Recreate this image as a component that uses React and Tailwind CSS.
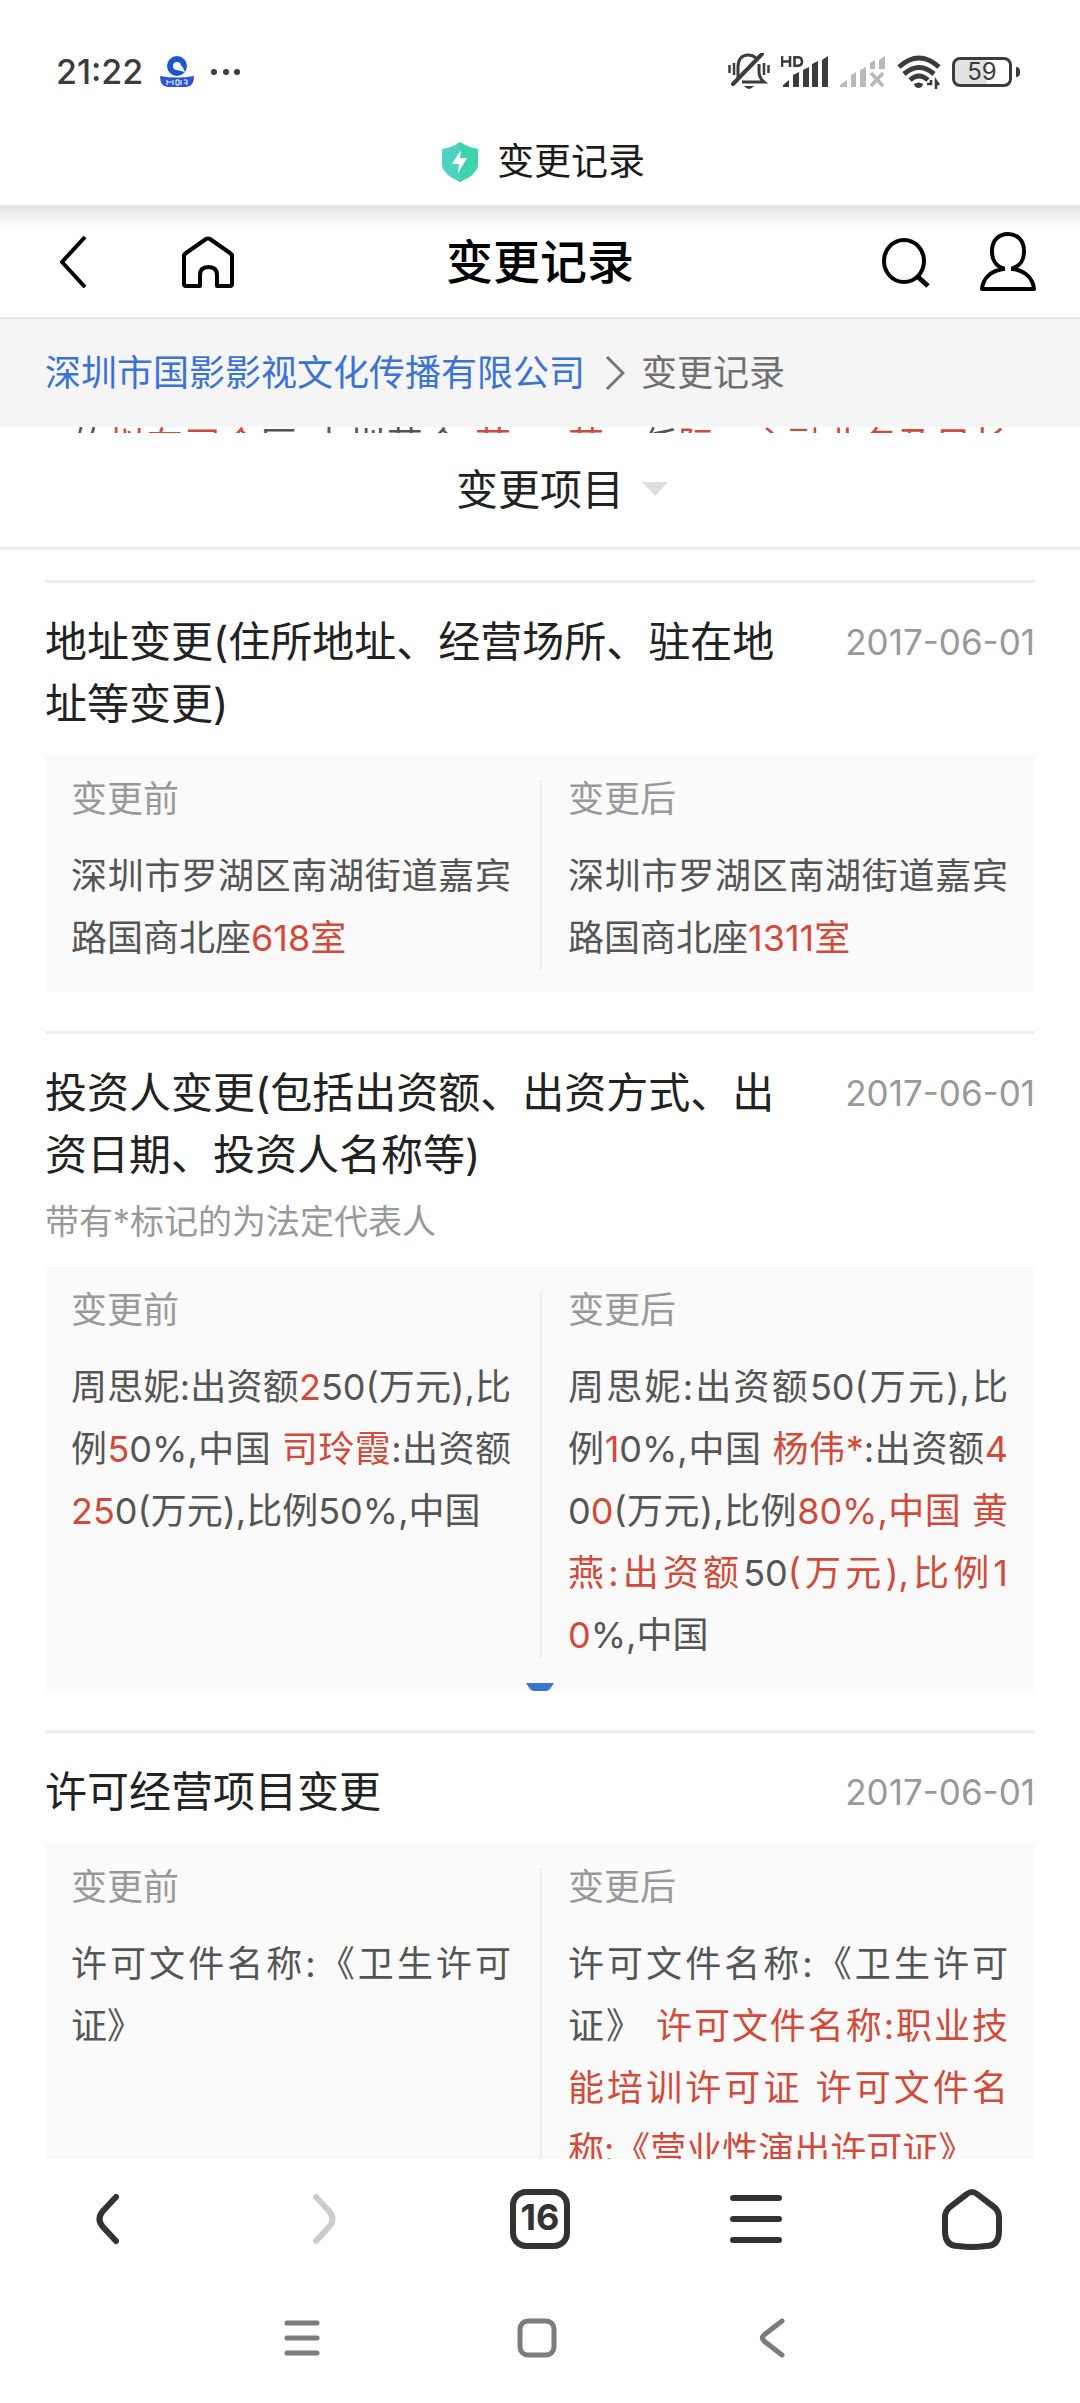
import React from 'react';

const records = [
  {
    title: '地址变更(住所地址、经营场所、驻在地址等变更)',
    date: '2017-06-01',
    before: [['深圳市罗湖区南湖街道嘉宾路国商北座'], ['618室', true]],
    after: [['深圳市罗湖区南湖街道嘉宾路国商北座'], ['1311室', true]]
  },
  {
    title: '投资人变更(包括出资额、出资方式、出资日期、投资人名称等)',
    date: '2017-06-01',
    note: '带有*标记的为法定代表人',
    collapsed: true,
    before: [
      ['周思妮:出资额'], ['2', true], ['50(万元),比例'], ['5', true], ['0%,中国 '],
      ['司玲霞', true], [':出资额'], ['25', true], ['0(万元),比例50%,中国']
    ],
    after: [
      ['周思妮:出资额50(万元),比例'], ['1', true], ['0%,中国 '], ['杨伟*', true], [':出资额'],
      ['4', true], ['0'], ['0', true], ['(万元),比例'], ['80%,中国 黄燕:出资额', true], ['50'],
      ['(万元),比例10', true], ['%,中国']
    ]
  },
  {
    title: '许可经营项目变更',
    date: '2017-06-01',
    before: [['许可文件名称:《卫生许可证》']],
    after: [
      ['许可文件名称:《卫生许可证》 '],
      ['许可文件名称:职业技能培训许可证 许可文件名称:《营业性演出许可证》', true]
    ]
  }
];

const DiffText = ({ parts }) => (
  <>
    {parts.map(([text, changed], index) => (
      <span key={index} className={changed ? 'text-[#d24a3a]' : undefined}>{text}</span>
    ))}
  </>
);

const StatusBar = () => (
  <div className="flex h-[130px] shrink-0 items-center justify-between pt-[14px] pr-[60px] pl-14 text-[#3c3c3c]">
    <div className="flex items-center gap-4">
      <span className="text-[34px] leading-none font-medium">21:22</span>
      <svg width="36" height="34" viewBox="0 0 36 34">
        <circle cx="18" cy="11" r="7" fill="none" stroke="#1b55cf" strokeWidth="6" />
        <path d="M18 11h5l3 6-8-2z" fill="#fff" />
        <path d="M1 21q17 3 34 0q0 11-8 11H9q-8 0-8-11z" fill="#2f55d4" />
        <path d="M8 25v5M8 27h5M14 25v5M17 25h3v5h-3zM22 25v5M25 25h3M25 28h3M28 25v5" stroke="#fff" strokeWidth="1" fill="none" />
      </svg>
      <svg width="30" height="8" viewBox="0 0 30 8" fill="#3c3c3c">
        <circle cx="3" cy="4" r="3" />
        <circle cx="15" cy="4" r="3" />
        <circle cx="26" cy="4" r="3" />
      </svg>
    </div>

    <div className="flex items-center gap-[11px]">
      {/* Silent mode */}
      <svg width="42" height="38" viewBox="0 0 42 38" fill="none" stroke="#3c3c3c" strokeWidth="3">
        <path d="M10 27V14C10 6 14 2 20 2q5 0 8 3" />
        <path d="M31 11v7q0 7 5 11H14" />
        <path d="M34 1L5 31" strokeWidth="4" strokeLinecap="round" />
        <path d="M1.500 12v8M6 10v12M36 10v12M40.500 12v8" strokeWidth="2.500" />
        <path d="M16 33h10q-5 6-10 0z" fill="#3c3c3c" stroke="none" />
      </svg>
      {/* Signal, first card */}
      <svg width="48" height="34" viewBox="0 0 48 34" fill="#3c3c3c">
        <path d="M1 1v11M9 1v11M1 6.500h8M13.500 2.300v8.500h3q4.500 0 4.500-4.300t-4.500-4.200z" fill="none" stroke="#3c3c3c" strokeWidth="2.600" />
        <path d="M2 32v-2l6-5v7zM12 32V20l6-3v15zM22 32V15l6-3v20zM31 32V9l6-3v26zM41 32V5l6-4v31z" />
      </svg>
      {/* Signal, second card */}
      <svg width="46" height="34" viewBox="0 0 46 34" fill="#b9b9b9">
        <path d="M0 32v-2l7-5v7zM11 32V20l5-3v15zM20 32V15l6-3v20zM30 14V8l5-3v9zM39 14V5l6-4v13z" />
        <path d="M31 18l12 13M43 18L31 31" stroke="#b9b9b9" strokeWidth="3.600" />
      </svg>
      {/* Wifi */}
      <svg width="44" height="36" viewBox="0 0 44 36" fill="none" stroke="#3c3c3c" strokeWidth="5">
        <path d="M2 13q20-18 40 0" />
        <path d="M7 20q15-13 30 0" />
        <path d="M13 26q9-8 18 0" />
        <path d="M17 30q5-3 9 0q-1 4-4.500 4t-4.500-4z" fill="#3c3c3c" stroke="none" />
        <path d="M30 30h4V26M39 35v-8l3 4" strokeWidth="2.600" />
      </svg>
      {/* Battery */}
      <div className="flex items-center gap-1">
        <div className="flex h-[30px] w-[60px] items-center justify-center rounded-lg border-[3px] border-[#3c3c3c] bg-linear-to-r from-[#e2e2e2] from-60% to-white to-60% text-2xl leading-none">
          59
        </div>
        <div className="h-[10px] w-[4px] rounded-r-sm bg-[#3c3c3c]" />
      </div>
    </div>
  </div>
);

const TitleBar = () => (
  <div className="flex h-[75px] shrink-0 items-center justify-center gap-[18px] pb-[12px] pl-[6px] text-[#1b1b1b]">
    <svg width="38" height="42" viewBox="0 0 38 42">
      <path d="M19 1q9 6 18 7v17q-2 9-18 16Q3 34 1 25V8q9-1 18-7z" fill="#4fd3c0" />
      <path d="M19 1q9 6 18 7v17q-2 9-18 16z" fill="#3fd3ad" />
      <path d="M20 9l-9 14h7l-1 9 9-15h-7z" fill="#fff" />
    </svg>
    <span className="text-[37px] leading-none">变更记录</span>
  </div>
);

const Header = () => (
  <header className="flex h-[114px] shrink-0 items-center border-b-2 border-[#e8e8e8] bg-linear-to-b from-[#e2e2e2] to-white to-20% px-11">
    <div className="flex flex-1 items-center gap-[94px]">
      <button aria-label="返回" className="pl-3">
        <svg width="32" height="54" viewBox="0 0 32 54" fill="none" stroke="#000" strokeWidth="4" strokeLinejoin="round">
          <path d="M29 3L6 28l23 25" />
        </svg>
      </button>
      <a href="#home" aria-label="首页">
        <svg width="52" height="54" viewBox="0 0 52 54" fill="none" stroke="#000" strokeWidth="4" strokeLinejoin="round">
          <path d="M18 52H4q-2 0-2-2V21l2-2L24 5q2-1 4 0l20 14 2 2v29q0 2-2 2H35V41q0-8-8.500-8T18 41z" />
          <path d="M20 52h13" stroke="#fff" strokeWidth="5" />
        </svg>
      </a>
    </div>
    <h1 className="text-[47px] leading-none font-medium text-black">变更记录</h1>
    <div className="flex flex-1 items-center justify-end gap-[50px]">
      <button aria-label="搜索">
        <svg width="50" height="54" viewBox="0 0 50 54" fill="none" stroke="#000" strokeWidth="4">
          <ellipse cx="24" cy="27" rx="20" ry="21" />
          <path d="M37 42l11 10" strokeWidth="5" />
        </svg>
      </button>
      <button aria-label="我的">
        <svg width="56" height="60" viewBox="0 0 56 60" fill="none" stroke="#000" strokeWidth="4" strokeLinejoin="round">
          <path d="M25 38C15 35 12 29 12 20c0-11 7-17 16-17s16 6 16 17c0 9-3 15-13 18h2c12 2 20 9 21 20H2c1-11 9-18 21-20z" />
          <path d="M25 38h6" stroke="#fff" strokeWidth="6" />
        </svg>
      </button>
    </div>
  </header>
);

const Breadcrumb = () => (
  <nav className="flex h-[108px] shrink-0 items-center gap-4 bg-[#f5f5f5] px-[45px] text-[36px] leading-none">
    <a href="#company" className="pr-1 text-[#3a73d1]">深圳市国影影视文化传播有限公司</a>
    <svg width="20" height="34" viewBox="0 0 20 34" fill="none" stroke="#777" strokeWidth="3">
      <path d="M2 1l16 16L2 33" />
    </svg>
    <span className="text-[#707070]">变更记录</span>
  </nav>
);

const Column = ({ label, parts, collapsed, className }) => (
  <div className={collapsed ? `${className} max-h-[366px] overflow-hidden` : className}>
    <div className="text-[36px] leading-[38px] text-[#999]">{label}</div>
    <p className="mt-[27px] text-justify text-[36px] leading-[62px] break-all text-[#555]">
      <DiffText parts={parts} />
    </p>
  </div>
);

const RecordItem = ({ record }) => (
  <article className="mb-[39px] border-t-[3px] border-[#eee] pt-7">
    <div className="flex items-start justify-between">
      <h2 className="w-[730px] text-[42px] leading-[62px] text-[#222]">{record.title}</h2>
      <time className="text-[35px] leading-[62px] text-[#999]">{record.date}</time>
    </div>
    {record.note && <p className="mt-3 text-[34px] leading-[48px] text-[#999]">{record.note}</p>}
    <div className={record.collapsed ? 'mt-[21px] bg-[#fafafa] pt-6' : 'mt-[21px] bg-[#fafafa] pt-6 pb-[23px]'}>
      <div className="grid grid-cols-2">
        <Column label="变更前" parts={record.before} collapsed={record.collapsed} className="pr-[29px] pl-[26px]" />
        <Column label="变更后" parts={record.after} collapsed={record.collapsed} className="border-l-2 border-[#eee] pr-[27px] pl-[26px]" />
      </div>
      {record.collapsed && (
        <button aria-label="展开" className="flex h-[34px] w-full items-end justify-center">
          <svg width="28" height="8" viewBox="0 0 28 8">
            <path d="M0 0h28l-4 6q-2 2-4 2H8q-2 0-4-2z" fill="#3a73d1" />
          </svg>
        </button>
      )}
    </div>
  </article>
);

const BrowserNav = () => (
  <nav className="grid h-[120px] shrink-0 grid-cols-5 place-items-center bg-white text-[#333]">
    <button aria-label="后退">
      <svg width="24" height="52" viewBox="0 0 24 52" fill="none" stroke="#333" strokeWidth="6" strokeLinecap="round">
        <path d="M20 4L7 18q-7 8 0 16l13 14" />
      </svg>
    </button>
    <button aria-label="前进" disabled>
      <svg width="24" height="52" viewBox="0 0 24 52" fill="none" stroke="#ccc" strokeWidth="6" strokeLinecap="round">
        <path d="M4 4l13 14q7 8 0 16L4 48" />
      </svg>
    </button>
    <button className="flex size-[60px] items-center justify-center rounded-2xl border-6 border-[#333] pb-1 text-[36px] leading-none font-bold">16</button>
    <button aria-label="菜单">
      <svg width="52" height="50" viewBox="0 0 52 50" stroke="#333" strokeWidth="6" strokeLinecap="round">
        <path d="M3 4h46M3 25h46M3 46h46" />
      </svg>
    </button>
    <button aria-label="主页">
      <svg width="60" height="62" viewBox="0 0 60 62" fill="none" stroke="#333" strokeWidth="6">
        <path d="M25 6q5-4 10 0l17 13q5 4 5 10v14q0 15-13 15Q30 60 16 58Q3 58 3 43V29q0-6 5-10z" />
      </svg>
    </button>
  </nav>
);

const SystemNav = () => (
  <nav className="flex h-[124px] shrink-0 items-center justify-center bg-white pr-[6px] pb-[6px]">
    <button aria-label="最近任务" className="flex w-[235px] justify-center">
      <svg width="36" height="36" viewBox="0 0 36 36" stroke="#7c7c7c" strokeWidth="5" strokeLinecap="round">
        <path d="M3 3h30M3 18h30M3 33h30" />
      </svg>
    </button>
    <button aria-label="桌面" className="flex w-[235px] justify-center">
      <svg width="40" height="40" viewBox="0 0 40 40" fill="none" stroke="#7c7c7c" strokeWidth="5">
        <rect x="3" y="3" width="34" height="34" rx="8" />
      </svg>
    </button>
    <button aria-label="上一页" className="flex w-[235px] justify-center">
      <svg width="26" height="40" viewBox="0 0 26 40" fill="none" stroke="#7c7c7c" strokeWidth="5" strokeLinecap="round">
        <path d="M23 3L5 17q-3 3 0 6l18 14" />
      </svg>
    </button>
  </nav>
);

const App = () => {
  return (
    <div className="flex h-screen flex-col bg-white font-['Inter','Noto_Sans_CJK_SC',sans-serif]">
      <StatusBar />
      <TitleBar />
      <Header />
      <Breadcrumb />

      {/* Tail of the record that is scrolled under the filter bar */}
      <div className="grid h-[6px] shrink-0 grid-cols-2 items-center overflow-hidden px-[45px] text-[36px] leading-none text-[#555]">
        <p className="pr-[29px] pl-[26px] text-justify [text-align-last:justify]">
          <DiffText parts={[['的'], ['拟有司会', true], ['匡:中圳营会'], [':营', true]]} />
        </p>
        <p className="pr-[27px] pl-[28px] text-justify [text-align-last:justify]">
          <DiffText parts={[['营、', true], ['任'], ['际、主融业务及目长', true]]} />
        </p>
      </div>
      <button className="flex h-[117px] shrink-0 items-center justify-center gap-[18px] border-b-[3px] border-[#eee] pb-[2px] pl-[44px] text-[42px] text-[#222]">
        变更项目
        <svg width="26" height="14" viewBox="0 0 26 14">
          <path d="M0 0h26L13 14z" fill="#dedede" />
        </svg>
      </button>

      <main className="min-h-0 flex-1 overflow-y-auto px-[45px] pt-[30px] [scrollbar-width:none]">
        {records.map((record) => (
          <RecordItem key={record.title} record={record} />
        ))}
      </main>

      <BrowserNav />
      <SystemNav />
    </div>
  );
};

export default App;
